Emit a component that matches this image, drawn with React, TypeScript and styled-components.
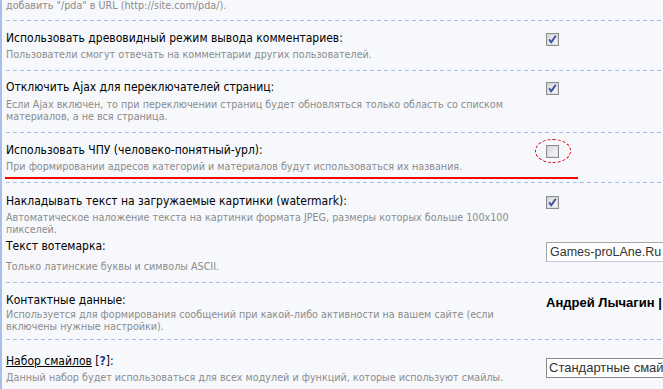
import React from "react";
import styled, { createGlobalStyle } from "styled-components";

const GlobalStyle = createGlobalStyle`
  html, body {
    margin: 0;
    padding: 0;
    background: #f6f8fc;
  }
  body {
    font-family: "DejaVu Sans Condensed", "DejaVu Sans", Verdana, sans-serif;
    font-stretch: condensed;
  }
`;

const Page = styled.div`
  height: 389px;
  overflow: hidden;
  border-left: 2px solid #a9bfe9;
  padding-left: 4px;
  background: #f6f8fc;
`;

const Row = styled.div<{ $top?: number; $bottom?: number }>`
  position: relative;
  display: flex;
  flex-direction: column;
  gap: 2px;
  padding: ${(p) => p.$top ?? 9}px 0 ${(p) => p.$bottom ?? 10}px;
  background-image: linear-gradient(to right, #a7bde7 4px, transparent 4px);
  background-size: 7px 1px;
  background-repeat: repeat-x;
  background-position: left bottom;
`;

const Field = styled.div`
  display: grid;
  grid-template-columns: 540px 1fr;
  align-items: start;
`;

const Label = styled.div`
  padding-right: 14px;
`;

const Title = styled.div`
  font-size: 12px;
  line-height: 16px;
  color: #000;
  white-space: nowrap;
`;

const Desc = styled.div<{ $gap?: number }>`
  margin-top: ${(p) => p.$gap ?? 3}px;
  font-size: 10.7px;
  line-height: 12px;
  color: #8c8c8c;
`;

const Control = styled.div<{ $offset?: number }>`
  position: relative;
  padding-top: ${(p) => p.$offset ?? 1}px;
  white-space: nowrap;
`;

const BoxWrap = styled.span`
  position: relative;
  display: inline-block;
  width: 13px;
  height: 13px;
`;

const Mark = styled.span`
  position: absolute;
  left: -11px;
  top: -6px;
  width: 36px;
  height: 24px;
  box-sizing: border-box;
  border: 1px dashed #e8000b;
  border-radius: 50%;
`;

const Underline = styled.div`
  position: absolute;
  left: -1px;
  bottom: 4px;
  width: 573px;
  height: 2px;
  background: #f00;
`;

const TextInput = styled.input`
  box-sizing: border-box;
  width: 150px;
  height: 20px;
  margin: 0;
  padding: 0 3px;
  border: 1px solid #a5a5a5;
  border-bottom-color: #c3c9d8;
  border-right-color: #c3c9d8;
  background: #fff;
  font-family: "Liberation Sans", Arial, sans-serif;
  font-size: 12.5px;
  color: #333;
  outline: none;
`;

const Select = styled.select`
  appearance: none;
  box-sizing: border-box;
  width: 160px;
  height: 20px;
  margin: 0;
  padding: 0 2px;
  border: 1px solid #8a8a8a;
  border-radius: 0;
  background: #fff;
  font-family: "Liberation Sans", Arial, sans-serif;
  font-size: 13px;
  color: #333;
`;

const Contact = styled.span`
  font-family: "Liberation Sans", Arial, sans-serif;
  font-size: 13px;
  line-height: 16px;
  font-weight: bold;
  color: #000;
`;

const HelpLink = styled.a`
  color: #000;
  text-decoration: underline;
`;

const Hint = styled.b`
  color: #1c3f94;
`;

const Checkbox = ({ checked }: { checked: boolean }) => (
  <svg width="13" height="13" viewBox="0 0 13 13" style={{ display: "block" }}>
    <defs>
      <linearGradient id={checked ? "cbOn" : "cbOff"} x1="0" y1="0" x2="1" y2="1">
        <stop offset="0" stopColor="#d6d6da" />
        <stop offset="1" stopColor="#fbfbfc" />
      </linearGradient>
    </defs>
    <rect x="0.5" y="0.5" width="12" height="12" fill="#fff" stroke="#8c8d8f" />
    <rect x="1.5" y="1.5" width="10" height="10" fill={`url(#${checked ? "cbOn" : "cbOff"})`} stroke="#c9cacc" strokeWidth="0.6" />
    {checked && (
      <path d="M3.2 6.2 L5.2 9.4 L9.8 2.8" fill="none" stroke="#3f51a3" strokeWidth="1.9" strokeLinejoin="round" />
    )}
  </svg>
);

export default function App() {
  return (
    <>
      <GlobalStyle />
      <Page>
        <Row $top={0} $bottom={9}>
          <Field>
            <Label>
              <Desc $gap={0}>добавить "/pda" в URL (http://site.com/pda/).</Desc>
            </Label>
          </Field>
        </Row>

        <Row>
          <Field>
            <Label>
              <Title>Использовать древовидный режим вывода комментариев:</Title>
              <Desc>Пользователи смогут отвечать на комментарии других пользователей.</Desc>
            </Label>
            <Control>
              <BoxWrap><Checkbox checked /></BoxWrap>
            </Control>
          </Field>
        </Row>

        <Row $top={8}>
          <Field>
            <Label>
              <Title>Отключить Ajax для переключателей страниц:</Title>
              <Desc $gap={4}>
                Если Ajax включен, то при переключении страниц будет обновляться только область со списком
                материалов, а не вся страница.
              </Desc>
            </Label>
            <Control>
              <BoxWrap><Checkbox checked /></BoxWrap>
            </Control>
          </Field>
        </Row>

        <Row>
          <Field>
            <Label>
              <Title>Использовать ЧПУ (человеко-понятный-урл):</Title>
              <Desc>При формировании адресов категорий и материалов будут использоваться их названия.</Desc>
            </Label>
            <Control>
              <BoxWrap>
                <Checkbox checked={false} />
                <Mark />
              </BoxWrap>
            </Control>
          </Field>
          <Underline />
        </Row>

        <Row $top={10}>
          <Field>
            <Label>
              <Title>Накладывать текст на загружаемые картинки (watermark):</Title>
              <Desc>
                Автоматическое наложение текста на картинки формата JPEG, размеры которых больше 100x100
                пикселей.
              </Desc>
            </Label>
            <Control>
              <BoxWrap><Checkbox checked /></BoxWrap>
            </Control>
          </Field>
          <Field>
            <Label>
              <Title>Текст вотемарка:</Title>
              <Desc $gap={7}>Только латинские буквы и символы ASCII.</Desc>
            </Label>
            <Control $offset={3}>
              <TextInput defaultValue="Games-proLAne.Ru" />
            </Control>
          </Field>
        </Row>

        <Row $bottom={7}>
          <Field>
            <Label>
              <Title>Контактные данные:</Title>
              <Desc $gap={1}>
                Используется для формирования сообщений при какой-либо активности на вашем сайте (если
                включены нужные настройки).
              </Desc>
            </Label>
            <Control $offset={0}>
              <Contact>Андрей Лычагин |</Contact>
            </Control>
          </Field>
        </Row>

        <Row $top={13}>
          <Field>
            <Label>
              <Title>
                <HelpLink href="#">Набор смайлов</HelpLink> [<Hint>?</Hint>]:
              </Title>
              <Desc>Данный набор будет использоваться для всех модулей и функций, которые используют смайлы.</Desc>
            </Label>
            <Control $offset={4}>
              <Select defaultValue="std">
                <option value="std">Стандартные смайлы</option>
              </Select>
            </Control>
          </Field>
        </Row>
      </Page>
    </>
  );
}
